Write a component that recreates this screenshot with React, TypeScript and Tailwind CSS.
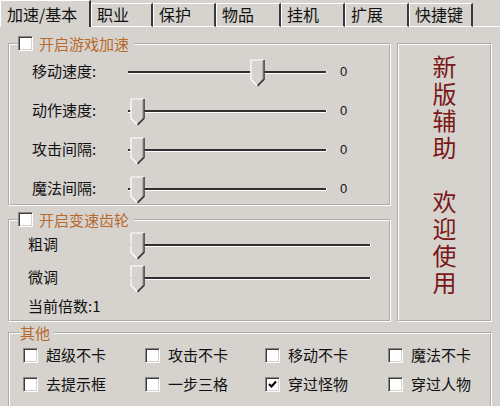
import type { ReactNode } from 'react';

const tabs = [
  { label: '加速/基本', w: 'w-[91px]' },
  { label: '职业', w: 'w-[62px]' },
  { label: '保护', w: 'w-[63px]' },
  { label: '物品', w: 'w-[65px]' },
  { label: '挂机', w: 'w-[64px]' },
  { label: '扩展', w: 'w-[64px]' },
  { label: '快捷键', w: 'w-[64px]' },
];

const speedRows = [
  { label: '移动速度:', pos: 122 },
  { label: '动作速度:', pos: 2 },
  { label: '攻击间隔:', pos: 2 },
  { label: '魔法间隔:', pos: 2 },
];

const others = [
  { label: '超级不卡', checked: false },
  { label: '攻击不卡', checked: false },
  { label: '移动不卡', checked: false },
  { label: '魔法不卡', checked: false },
  { label: '去提示框', checked: false },
  { label: '一步三格', checked: false },
  { label: '穿过怪物', checked: true },
  { label: '穿过人物', checked: false },
];

const welcome = ['新', '版', '辅', '助', '', '欢', '迎', '使', '用'];

function CheckBox({ checked = false }: { checked?: boolean }) {
  return (
    <span className="w-[15px] h-[15px] shrink-0 bg-white border border-t-[#8a8884] border-l-[#8a8884] border-b-white border-r-white shadow-[inset_1px_1px_0_#3c3c3c,inset_-1px_-1px_0_#d6d3ce] flex items-center justify-center">
      {checked && (
        <svg width="9" height="9" viewBox="0 0 9 9">
          <path d="M1 4 L3.5 6.5 L8 1.5" fill="none" stroke="#000" strokeWidth="2" />
        </svg>
      )}
    </span>
  );
}

function Thumb() {
  return (
    <svg width="15" height="28" viewBox="0 0 15 28">
      <path d="M0.5 0.5 L14.5 0.5 L14.5 20.5 L7.5 27.5 L0.5 20.5 Z" fill="#d6d3ce" />
      <path d="M1 1 L14 1 M1 1 L1 20.5 L7.5 27" fill="none" stroke="#fff" strokeWidth="1.2" />
      <path d="M14 1 L14 20.5 L7.5 27" fill="none" stroke="#2c2c2c" strokeWidth="1.4" />
      <path d="M13 2 L13 20 L7.5 25.5" fill="none" stroke="#8a8884" strokeWidth="1" />
    </svg>
  );
}

function Slider({ width, pos }: { width: string; pos: number }) {
  return (
    <div className={`relative h-full ${width} flex items-center`}>
      <div className="w-full h-[2px] bg-[#303030] shadow-[0_1px_0_#ffffff,1px_0_0_#ffffff]" />
      <div className="absolute top-[calc(50%-13px)]" style={{ left: pos }}>
        <Thumb />
      </div>
    </div>
  );
}

function Legend({ children, ml }: { children: ReactNode; ml: string }) {
  return (
    <legend className={`${ml} pr-[5px] flex items-center gap-[6px] text-[#b8692c] text-[15px] leading-[17px]`}>
      {children}
    </legend>
  );
}

const groupBox = 'border-2 [border-style:groove] border-white p-0 m-0 min-w-0';

export default function App() {
  return (
    <div className="w-[500px] h-[406px] overflow-hidden bg-[#d6d3ce] text-[#111] font-['Noto_Sans_CJK_SC','Noto_Sans',sans-serif]">
      {/* tab strip */}
      <div className="flex items-end h-[27px]">
        {tabs.map((tab, i) => (
          <div
            key={tab.label}
            className={
              i === 0
                ? `${tab.w} h-[27px] border-t border-l border-white border-r-2 border-r-[#3a3a3a] pl-[6px] pt-[2px] text-[16px] leading-[22px]`
                : `${tab.w} h-[24px] border-t border-l border-white border-r-2 border-r-[#3a3a3a] border-b border-b-white pl-[5px] text-[16px] leading-[21px]`
            }
          >
            {tab.label}
          </div>
        ))}
        <div className="flex-1 border-b border-white" />
      </div>

      <div className="flex px-[8px]">
        <div className="w-[383px] flex flex-col">
          {/* 游戏加速 */}
          <fieldset className={`${groupBox} mt-[8px] h-[171px]`}>
            <Legend ml="ml-[8px]">
              <CheckBox />
              <span>开启游戏加速</span>
            </Legend>
            {speedRows.map((row) => (
              <div key={row.label} className="h-[39px] flex items-center pl-[22px]">
                <span className="w-[96px] text-[15px]">{row.label}</span>
                <Slider width="w-[198px]" pos={row.pos} />
                <span className="ml-[14px] text-[13px] font-['Liberation_Sans',sans-serif]">0</span>
              </div>
            ))}
          </fieldset>

          {/* 变速齿轮 */}
          <fieldset className={`${groupBox} mt-[5px] h-[111px]`}>
            <Legend ml="ml-[8px]">
              <CheckBox />
              <span>开启变速齿轮</span>
            </Legend>
            <div className="h-[33px] flex items-center pl-[18px]">
              <span className="w-[102px] text-[15px]">粗调</span>
              <Slider width="w-[240px]" pos={0} />
            </div>
            <div className="h-[33px] flex items-center pl-[18px]">
              <span className="w-[102px] text-[15px]">微调</span>
              <Slider width="w-[240px]" pos={0} />
            </div>
            <div className="h-[24px] flex items-center pl-[18px] text-[15px]">当前倍数:1</div>
          </fieldset>
        </div>

        {/* 右侧提示 */}
        <div className="ml-[6px] mt-[16px] w-[95px] h-[279px] border-2 [border-style:groove] border-white flex flex-col items-center pt-[7px] text-[24px] text-[#7a1818]">
          {welcome.map((ch, i) => (
            <span key={i} className="block h-[27px] leading-[27px]">
              {ch}
            </span>
          ))}
        </div>
      </div>

      {/* 其他 */}
      <div className="px-[8px] mt-[3px]">
        <fieldset className={`${groupBox} h-[100px]`}>
          <legend className="ml-[10px] pr-[4px] text-[#b8692c] text-[15px] leading-[16px]">其他</legend>
          <div className="grid grid-cols-[122px_120px_123px_1fr] pl-[13px]">
            {others.map((item) => (
              <div key={item.label} className="h-[29px] flex items-center gap-[8px] text-[15px]">
                <CheckBox checked={item.checked} />
                <span>{item.label}</span>
              </div>
            ))}
          </div>
        </fieldset>
      </div>
    </div>
  );
}
